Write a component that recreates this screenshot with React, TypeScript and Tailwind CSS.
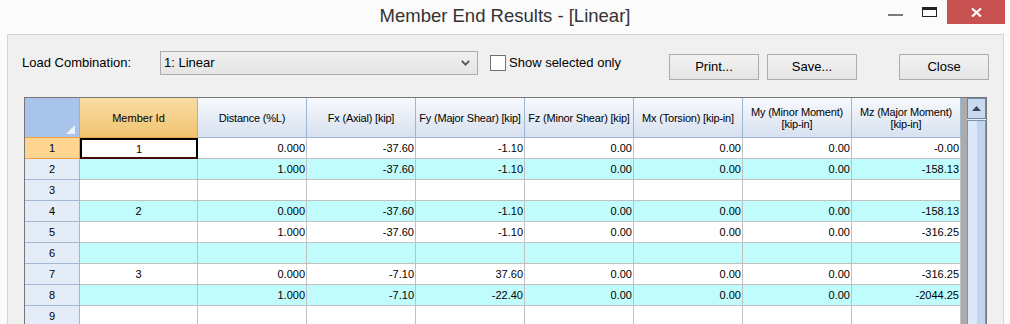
import React from 'react';

type Row = { id: string; cells: string[] };

const rows: Row[] = [
  { id: '1', cells: ['0.000', '-37.60', '-1.10', '0.00', '0.00', '0.00', '-0.00'] },
  { id: '', cells: ['1.000', '-37.60', '-1.10', '0.00', '0.00', '0.00', '-158.13'] },
  { id: '', cells: ['', '', '', '', '', '', ''] },
  { id: '2', cells: ['0.000', '-37.60', '-1.10', '0.00', '0.00', '0.00', '-158.13'] },
  { id: '', cells: ['1.000', '-37.60', '-1.10', '0.00', '0.00', '0.00', '-316.25'] },
  { id: '', cells: ['', '', '', '', '', '', ''] },
  { id: '3', cells: ['0.000', '-7.10', '37.60', '0.00', '0.00', '0.00', '-316.25'] },
  { id: '', cells: ['1.000', '-7.10', '-22.40', '0.00', '0.00', '0.00', '-2044.25'] },
  { id: '', cells: ['', '', '', '', '', '', ''] },
];

const headers: string[][] = [
  ['Distance (%L)'],
  ['Fx (Axial) [kip]'],
  ['Fy (Major Shear) [kip]'],
  ['Fz (Minor Shear) [kip]'],
  ['Mx (Torsion) [kip-in]'],
  ['My (Minor Moment)', '[kip-in]'],
  ['Mz (Major Moment)', '[kip-in]'],
];

const WinButton: React.FC<{ label: string; className?: string }> = ({ label, className }) => (
  <button
    className={
      'h-[26px] w-[90px] border border-[#acacac] bg-linear-to-b from-[#f2f2f2] to-[#e4e4e4] text-[13px] text-black ' +
      (className ?? '')
    }
  >
    {label}
  </button>
);

const TitleBar: React.FC = () => (
  <div className="grid h-[34px] shrink-0 grid-cols-[1fr_auto_1fr]">
    <div />
    <div className="pt-[7px] text-[18.5px] leading-[18px] text-[#333]">Member End Results - [Linear]</div>
    <div className="flex items-start justify-end pr-[5px]">
      <div className="mt-[14px] h-[2px] w-[15px] bg-[#7a7a7a]" />
      <div className="ml-[19px] mt-[7px] h-[10px] w-[15px] border border-t-[3px] border-[#222]" />
      <div className="ml-[10px] flex h-[24px] w-[58px] items-center justify-center bg-[#c75050]">
        <svg width="11" height="9" viewBox="0 0 11 9">
          <path d="M1 0.5 L10 8.5 M10 0.5 L1 8.5" stroke="#fff" strokeWidth="2.2" />
        </svg>
      </div>
    </div>
  </div>
);

const Controls: React.FC = () => (
  <div className="flex items-start pl-[14px] pr-[14px] pt-[16px] text-[13px] text-black">
    <div className="flex h-[24px] w-[138px] items-center">Load Combination:</div>
    <div className="flex h-[24px] w-[318px] items-center justify-between border border-[#acacac] bg-linear-to-b from-[#f0f0f0] to-[#e5e5e5] pl-[3px] pr-[7px]">
      <span>1: Linear</span>
      <svg width="9" height="6" viewBox="0 0 9 6">
        <path d="M0.8 0.8 L4.5 4.6 L8.2 0.8" fill="none" stroke="#555" strokeWidth="1.8" />
      </svg>
    </div>
    <div className="ml-[12px] flex h-[24px] items-center">
      <div className="h-[16px] w-[16px] border border-[#707070] bg-white" />
      <span className="ml-[3px]">Show selected only</span>
    </div>
    <div className="ml-auto mt-[3px] flex">
      <WinButton label="Print..." />
      <WinButton label="Save..." className="ml-[8px]" />
      <WinButton label="Close" className="ml-[42px]" />
    </div>
  </div>
);

const Grid: React.FC = () => (
  <div className="ml-[16px] mt-[17px] flex h-[240px] w-[963px] border border-[#777] text-[11px] leading-[12px] text-black">
    <div className="flex w-[936px] flex-col">
      <div className="flex h-[40px]">
        <div className="relative h-[40px] w-[55px] border-b border-r border-[#f0a040] bg-[#a9c4ea]">
          <svg className="absolute bottom-[3px] right-[4px]" width="9" height="9" viewBox="0 0 9 9">
            <path d="M9 0 L9 9 L0 9 Z" fill="#eef3fa" />
          </svg>
        </div>
        <div className="flex h-[40px] w-[118px] items-center justify-center border-b border-r border-[#eda74a] bg-linear-to-b from-[#f9dca4] to-[#f1c46e]">
          Member Id
        </div>
        {headers.map((h, i) => (
          <div
            key={i}
            className="flex h-[40px] w-[109px] flex-col items-center justify-center whitespace-nowrap border-b border-r border-[#9eb6ce] bg-linear-to-b from-[#f7f9fd] to-[#d7e1ef] text-center tracking-[-0.2px]"
          >
            {h.map((t) => (
              <span key={t}>{t}</span>
            ))}
          </div>
        ))}
      </div>
      {rows.map((r, ri) => {
        const cyan = ri % 2 === 1;
        const bg = cyan ? 'bg-[#c0fcfc]' : 'bg-white';
        const sel = ri === 0;
        return (
          <div key={ri} className="flex h-[21px] shrink-0">
            <div
              className={
                sel
                  ? 'flex h-[21px] w-[55px] items-center justify-center border-b border-r border-[#f0a040] bg-[#ffd591]'
                  : 'flex h-[21px] w-[55px] items-center justify-center border-b border-r border-[#a3b8d3] bg-[#e4ecf7]'
              }
            >
              {ri + 1}
            </div>
            <div
              className={
                sel
                  ? 'flex h-[21px] w-[118px] items-center justify-center border-2 border-black border-b-[#4a0a0a] bg-white'
                  : 'flex h-[21px] w-[118px] items-center justify-center border-b border-r border-[#c0c0c0] ' + bg
              }
            >
              {r.id}
            </div>
            {r.cells.map((c, ci) => (
              <div
                key={ci}
                className={'flex h-[21px] w-[109px] items-center justify-end border-b border-r border-[#c0c0c0] pr-[1px] ' + bg}
              >
                {c}
              </div>
            ))}
          </div>
        );
      })}
    </div>
    <div className="w-[6px] bg-[#ababab]" />
    <div className="flex w-[19px] flex-col">
      <div className="flex h-[21px] items-center justify-center border border-[#6f86ab] bg-[#c9d9f0]">
        <svg width="9" height="5" viewBox="0 0 9 5">
          <path d="M0 5 L4.5 0 L9 5 Z" fill="#3b475c" />
        </svg>
      </div>
      <div className="mt-[1px] flex flex-1 border border-[#7d92b6]">
        <div className="w-[9px] bg-[#dce7f7]" />
        <div className="flex-1 bg-[#c2d5f0]" />
      </div>
    </div>
  </div>
);

export default function App() {
  return (
    <div className="flex h-[324px] w-[1010px] flex-col overflow-hidden bg-[#fbfbfb] font-['Liberation_Sans',Arial,sans-serif]">
      <TitleBar />
      <div className="ml-[7px] min-h-0 w-[997px] flex-1 overflow-hidden border-l border-r border-t border-[#d5d5d5] bg-[#f0f0f0]">
        <Controls />
        <Grid />
      </div>
    </div>
  );
}
